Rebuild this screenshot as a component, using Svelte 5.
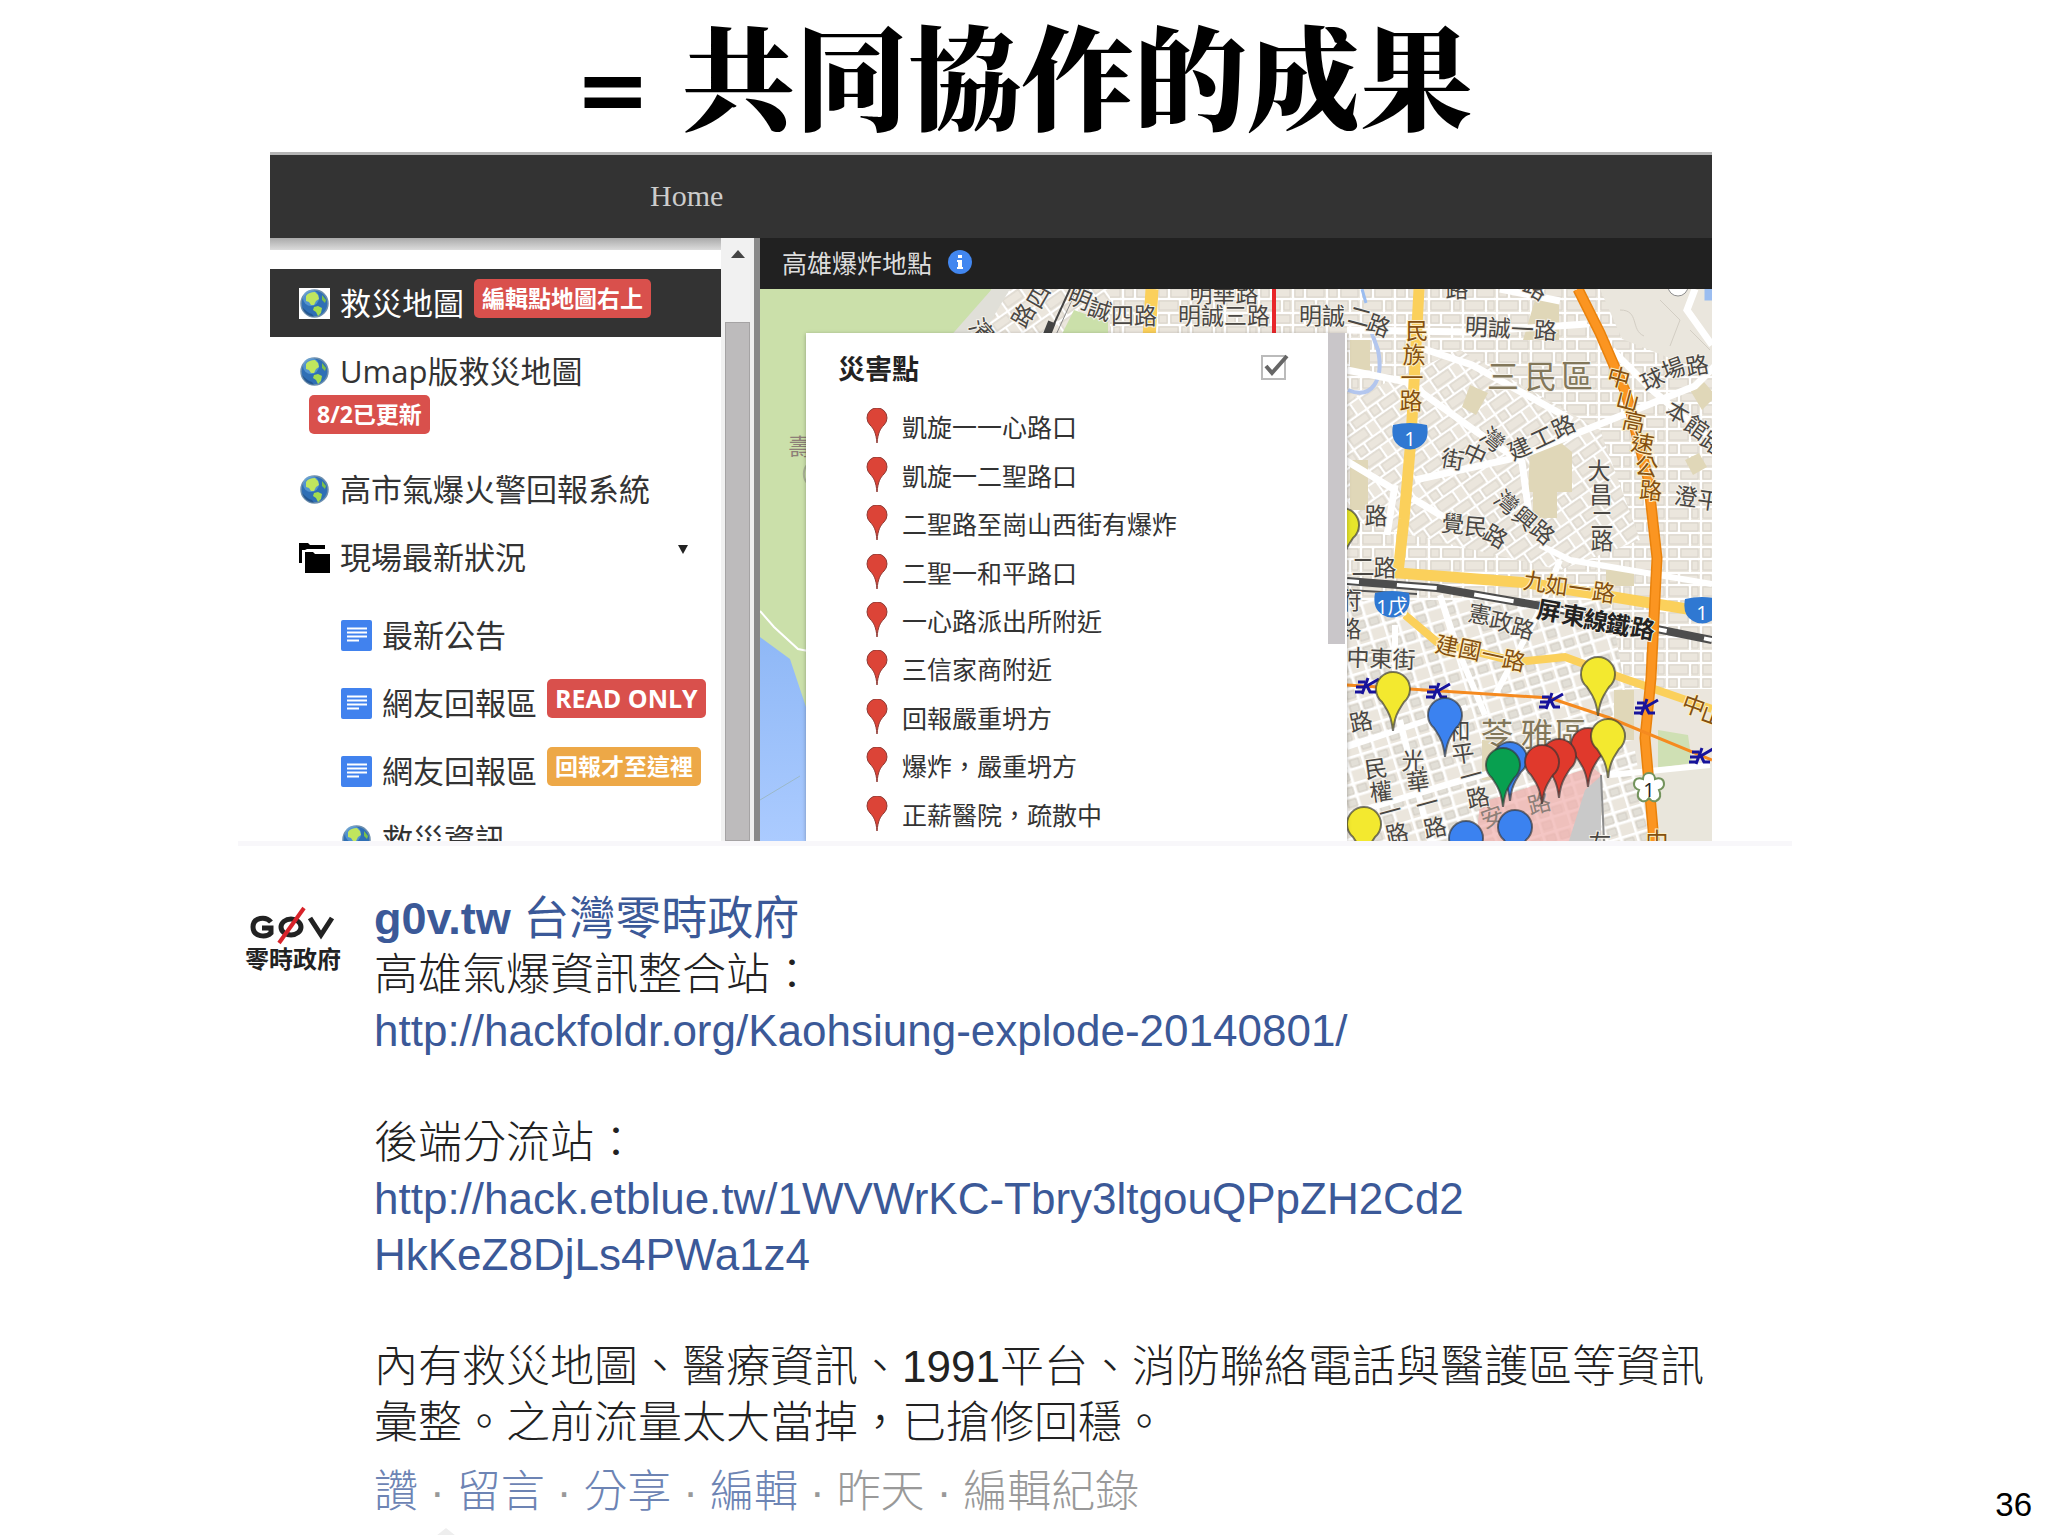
<script lang="ts">
	type Item = { icon: string; text: string; badge?: string; tone?: string; active?: boolean; wrap?: boolean };
	type Label = [string, number, number, number?, string?];

	const items: Item[] = [
		{ icon: 'globe', text: '救災地圖', badge: '編輯點地圖右上', tone: 'red', active: true },
		{ icon: 'globe', text: 'Umap版救災地圖', badge: '8/2已更新', tone: 'red', wrap: true },
		{ icon: 'globe', text: '高市氣爆火警回報系統' },
		{ icon: 'folder', text: '現場最新狀況' }
	];

	const subItems: Item[] = [
		{ icon: 'doc', text: '最新公告' },
		{ icon: 'doc', text: '網友回報區', badge: 'READ ONLY', tone: 'red latin' },
		{ icon: 'doc', text: '網友回報區', badge: '回報才至這裡', tone: 'orange' },
		{ icon: 'globe', text: '救災資訊' }
	];

	const places = [
		'凱旋一一心路口',
		'凱旋一二聖路口',
		'二聖路至崗山西街有爆炸',
		'二聖一和平路口',
		'一心路派出所附近',
		'三信家商附近',
		'回報嚴重坍方',
		'爆炸，嚴重坍方',
		'正薪醫院，疏散中'
	];

	let showLayer = $state(true);

	// text, x, y, rotation, kind
	const labels: Label[] = [
		['四', 1038, 296, -60], ['路', 1023, 315, -60], ['濱', 982, 330, 50],
		['明', 1080, 298, 22], ['誠', 1100, 309, 18], ['四路', 1134, 315],
		['明華路', 1224, 293], ['明誠三路', 1224, 315],
		['明誠', 1322, 315], ['二', 1360, 316, 15], ['路', 1379, 325, 20],
		['路', 1457, 288], ['路', 1536, 288, 30],
		['明誠一路', 1511, 328, 3],
		['民', 1417, 330, 0, 'major'], ['族', 1414, 354, 0, 'major'], ['一', 1412, 377, 0, 'major'], ['路', 1411, 400, 0, 'major'],
		['三', 1503, 375, 0, 'area'], ['民', 1541, 375, 0, 'area'], ['區', 1577, 375, 0, 'area'],
		['中', 1619, 377, 15, 'major'], ['山', 1628, 400, 15, 'major'], ['高', 1634, 421, 12, 'major'],
		['速', 1643, 443, 10, 'major'], ['公', 1647, 466, 8, 'major'], ['路', 1651, 490, 5, 'major'],
		['球', 1652, 379, -25], ['場', 1673, 368, -20], ['路', 1697, 365, -10],
		['本', 1678, 412, 30], ['館', 1697, 427, 35], ['路', 1713, 443, 35],
		['建', 1519, 448, -25], ['工', 1542, 437, -25], ['路', 1563, 426, -25],
		['灣', 1493, 439, 40], ['中', 1475, 454, 25], ['街', 1453, 459, 10],
		['大', 1599, 470], ['昌', 1601, 494], ['二', 1602, 519], ['路', 1602, 540],
		['灣', 1507, 502, 40], ['興', 1525, 518, 40], ['路', 1543, 532, 40],
		['覺', 1453, 523, 5], ['民', 1476, 526, 5], ['路', 1496, 536, 30],
		['澄', 1686, 496, 8], ['平', 1709, 500, 8],
		['路', 1376, 515], ['二', 1363, 566], ['路', 1385, 567],
		['九', 1535, 581, 8, 'major'], ['如', 1557, 585, 8, 'major'], ['一', 1580, 588, 8, 'major'], ['路', 1604, 592, 8, 'major'],
		['屏', 1549, 610, 10, 'rail'], ['東', 1574, 615, 10, 'rail'], ['線', 1596, 620, 10, 'rail'], ['鐵', 1618, 624, 10, 'rail'], ['路', 1643, 628, 10, 'rail'],
		['憲', 1480, 614, 10], ['政', 1501, 621, 12], ['路', 1523, 628, 15],
		['建', 1447, 645, 12, 'major'], ['國', 1470, 649, 12, 'major'], ['一', 1493, 655, 12, 'major'], ['路', 1514, 660, 12, 'major'],
		['中東街', 1381, 658, 2], ['路', 1361, 721, -12],
		['和', 1459, 730], ['平', 1463, 753, -8],
		['光', 1413, 760], ['華', 1418, 781, -8], ['民', 1376, 768, -8], ['權', 1381, 791, -8],
		['路', 1478, 797, -12], ['路', 1397, 833, -12], ['路', 1435, 827, -12],
		['一', 1471, 775, -15], ['一', 1427, 803, -15], ['一', 1390, 811, -15],
		['苓', 1497, 733, 0, 'area'], ['雅', 1537, 733, 0, 'area'], ['區', 1571, 733, 0, 'area'],
		['中', 1694, 705, 20, 'major'], ['山', 1713, 715, 20, 'major'],
		['安', 1492, 816, -20, 'soft'], ['路', 1539, 803, -15, 'soft'],
		['左', 1600, 842], ['中', 1657, 840, 0, 'major'],
		['府', 1350, 600], ['路', 1350, 628], ['壽', 800, 446, 0, 'soft']
	];

	const stations = [[1368, 686], [1439, 691], [1552, 701], [1647, 707], [1702, 756]];

	const markers = [
		{ x: 1342, y: 524, fill: '#e6e52b' },
		{ x: 1393, y: 688, fill: '#f3e92f' },
		{ x: 1445, y: 714, fill: '#3b82f0' },
		{ x: 1598, y: 673, fill: '#f3e92f' },
		{ x: 1588, y: 744, fill: '#e0392c' },
		{ x: 1559, y: 755, fill: '#e0392c' },
		{ x: 1510, y: 758, fill: '#3b82f0' },
		{ x: 1542, y: 761, fill: '#e0392c' },
		{ x: 1503, y: 764, fill: '#08a050' },
		{ x: 1608, y: 735, fill: '#f3e92f' },
		{ x: 1515, y: 826, fill: '#3b82f0' },
		{ x: 1466, y: 837, fill: '#3b82f0' },
		{ x: 1364, y: 823, fill: '#f3e92f' }
	];
</script>

{#snippet icon(name: string)}
	{#if name === 'globe'}
		<svg class="icon" viewBox="0 0 31 31" aria-hidden="true">
			<rect width="31" height="31" fill="#fff" />
			<circle cx="15.5" cy="15.5" r="13.5" fill="#2f6fb5" stroke="#6d8fae" stroke-width="1.5" />
			<circle cx="12" cy="10" r="8" fill="#6fb1e6" opacity=".55" />
			<path d="M7 8c2-3 5-4 9-4l3 3 1 4-3 2-2 4-3 0-2-3-3-1z" fill="#c0e65e" />
			<path d="M15 19l4-1 4 2-1 5-3 3-2-4-3-2z" fill="#a4dc4e" />
			<path d="M23 7l4 5-1 3-3-3z" fill="#7cc04a" />
			<path d="M3 19c2 6 6 9 12 10l-2-3c-4-1-7-4-10-7z" fill="#17406f" opacity=".5" />
		</svg>
	{:else if name === 'folder'}
		<svg class="icon" viewBox="0 0 31 31" aria-hidden="true">
			<path d="M0 1h9l2 2h15v4H8l-2 1H3v13H0z" fill="#000" />
			<path d="M6 10h8l2 2h15v19H6z" fill="#000" />
		</svg>
	{:else}
		<svg class="icon" viewBox="0 0 31 31" aria-hidden="true">
			<rect width="31" height="31" rx="2" fill="#4182ee" />
			<path d="M6 8.500h20M6 12.500h20M6 16.500h20M6 20.500h12" stroke="#fff" stroke-width="1.800" />
		</svg>
	{/if}
{/snippet}

{#snippet row(item: Item)}
	<a class="row" class:active={item.active} class:wrap={item.wrap} href="#{item.icon}">
		{@render icon(item.icon)}
		<span class="row-text">{item.text}</span>
		{#if item.badge}
			<span class="badge {item.tone}">{item.badge}</span>
		{/if}
		{#if item.icon === 'folder'}
			<span class="caret"></span>
		{/if}
	</a>
{/snippet}

<div class="slide">
	<h1><span class="equals">=</span> 共同協作的成果</h1>

	<section class="shot">
		<header class="topbar"><a href="#home">Home</a></header>

		<div class="body">
			<nav class="sidebar">
				<div class="list">
					{#each items as item}
						{@render row(item)}
					{/each}
					<div class="sub">
						{#each subItems as item}
							{@render row(item)}
						{/each}
					</div>
				</div>
				<div class="scrollbar">
					<span class="arrow"></span>
					<span class="thumb"></span>
				</div>
			</nav>

			<div class="map">
				<div class="map-title">
					<span>高雄爆炸地點</span>
					<svg width="24" height="24" viewBox="0 0 24 24" aria-hidden="true">
						<circle cx="12" cy="12" r="12" fill="#4287f0" />
						<path d="M10 5h4v3h-4zM9 10h5v7h1v2H9v-2h1v-5H9z" fill="#fff" />
					</svg>
				</div>

				<div class="canvas">
					<svg class="tiles" viewBox="760 289 952 552" preserveAspectRatio="xMinYMin slice" role="img" aria-label="高雄市地圖">
						<defs>
							<pattern id="gridA" width="34" height="26" patternUnits="userSpaceOnUse">
								<path d="M0 1h34M1 0v26M13 1v12M24 13v13M1 13h33" fill="none" stroke="#fff" stroke-width="2" />
								<path d="M3 3h8v8H3zM15 3h17v8H15zM3 15h19v9H3zM26 15h6v9h-6z" fill="none" stroke="#d8d3ca" stroke-width="1" />
							</pattern>
							<pattern id="gridB" width="34" height="26" patternUnits="userSpaceOnUse" patternTransform="rotate(-35)">
								<path d="M0 1h34M1 0v26M13 1v12M24 13v13M1 13h33" fill="none" stroke="#fff" stroke-width="2" />
								<path d="M3 3h8v8H3zM15 3h17v8H15zM3 15h19v9H3z" fill="none" stroke="#d8d3ca" stroke-width="1" />
							</pattern>
							<pattern id="gridC" width="30" height="26" patternUnits="userSpaceOnUse" patternTransform="rotate(-17)">
								<path d="M0 1h30M1 0v26M15 1v25M1 13h29" fill="none" stroke="#fff" stroke-width="3" />
								<path d="M4 4h9v7H4zM18 4h9v7h-9zM4 16h9v7H4z" fill="#e2dfd7" stroke="#d0ccc3" stroke-width="1" />
							</pattern>
							<linearGradient id="sea" x1="0" y1="0" x2="0" y2="1">
								<stop offset="0" stop-color="#8fb8f6" />
								<stop offset="1" stop-color="#abcbff" />
							</linearGradient>
						</defs>

						<rect x="760" y="289" width="952" height="552" fill="#ebe6dd" />
						<rect x="1110" y="289" width="602" height="400" fill="url(#gridA)" />
						<path d="M1347 400L1460 350 1600 430 1640 540 1560 570 1347 520z" fill="#ebe6dd" />
						<path d="M1347 400L1460 350 1600 430 1640 540 1560 570 1347 520zM960 289h150v60H940z" fill="url(#gridB)" />
						<path d="M1340 600h270l40 241h-310z" fill="#ebe6dd" />
						<path d="M1340 600h270l40 241h-310z" fill="url(#gridC)" />
						<path d="M1600 289h112v80l-40-10-50-20z" fill="#eae6dd" />
						<path d="M1620 310c20 0 10 20 24 26M1660 300l20 20-10 26M1690 330l20 20" fill="none" stroke="#d3cec4" stroke-width="1" />
						<path d="M1652 775l60-12v78h-50z" fill="#e9e6dc" />

						<!-- blocks and parks -->
						<path d="M1535 300h24v40h-36zM1530 450l30-8 12 10v40h-44zM1533 492h24v26h-24zM1690 390l14-8 12 14-14 14zM1350 340h20v30h-20zM1685 460l14-7 8 14-14 8zM1470 385l18 8-12 22-14-8zM1606 570h28v16h-28zM1350 460h18v50h-18zM1482 740h24v40h-24zM1614 690h20v50h-20z" fill="#e0d7b8" />
						<path d="M1658 730l30 5 4 28-34 5z" fill="#cfe0b4" />
						<path d="M1348 390c24 10 36-10 30-40l-8-22" fill="none" stroke="#b3c6ee" stroke-width="4" />
						<path d="M1362 289l4 14M1706 289v10h6v-10z" stroke="#9bbdf0" stroke-width="3" fill="#9bbdf0" />

						<!-- green belt and sea -->
						<path d="M760 289h232l-42 60H806v492h-46z" fill="#cbe0aa" />
						<path d="M992 289h18l-30 50h-32z" fill="#e0dfd8" />
						<path d="M1074 310l34 12v20h-50z" fill="#cbe0aa" />
						<path d="M760 637l30 22 10 30 8 24v128h-48z" fill="url(#sea)" />
						<path d="M760 611l14 16 24 22 10 2" fill="none" stroke="#fff" stroke-width="2" />
						<path d="M808 464a14 14 0 0 0 0 20" fill="none" stroke="#a9b396" stroke-width="2" />
						<path d="M760 800l40-24" stroke="#9bb8c8" stroke-width="1" />

						<!-- minor roads -->
						<g fill="none" stroke="#fff" stroke-width="7">
							<path d="M1347 370l60 12 70 50 45 30 8 60M1412 345l60 20 100 55M1415 480l100-22 180-72 20-20M1345 460l50 30M1412 498l50 30M1395 485l-8 50" />
							<path d="M1347 330l120 2 120-8M1500 289l60 12M1612 350l40 40 60 50M1712 345l-25-35 8-21" />
							<path d="M1560 560l-20 50-45 85M1440 595l20 60 25 60M1347 815l100-30 160-45M1347 747l120-40M1400 720l30 121M1610 775l100-10M1395 625v60M1540 545l30 15 142 24" stroke-width="6" />
						</g>

						<path d="M1480 803l112-36 10 8-26 66h-100z" fill="#f0b3b0" opacity=".75" />
						<path d="M1585 790l16-14v65h-32z" fill="#c9c9c9" />
						<path d="M1601 775l3 66" stroke="#8d8d8d" stroke-width="2" />

						<!-- rail -->
						<path d="M1347 581l90 7 110 19 165 33" fill="none" stroke="#4d4d4d" stroke-width="8" />
						<path d="M1347 581l90 7 110 19 165 33" fill="none" stroke="#fff" stroke-width="4" stroke-dasharray="40 38" stroke-dashoffset="28" />
						<path d="M1347 590l70 4" stroke="#555" stroke-width="2" />
						<path d="M1070 289l-22 48" stroke="#444" stroke-width="2" />
						<path d="M1077 289l-22 48" stroke="#888" stroke-width="1" />
						<path d="M1052 322l-6 15" stroke="#444" stroke-width="8" />

						<!-- main roads -->
						<g fill="none" stroke="#fbd05b" stroke-width="11">
							<path d="M1419 289l-8 150-7 80-6 54 130 10 184 30" />
							<path d="M1405 615l32 27 80 20 48-5 60 22 87 30" stroke-width="8" />
							<path d="M1152 289l-3 50" stroke-width="13" />
						</g>
						<path d="M1578 289l22 44 26 60 22 85 9 80-6 120-6 60 9 103" fill="none" stroke="#e9820c" stroke-width="11" />
						<path d="M1578 289l22 44 26 60 22 85 9 80-6 120-6 60 9 103" fill="none" stroke="#fb9521" stroke-width="8" />
						<path d="M1347 685l203 13 60 20 102 42" fill="none" stroke="#f58a1f" stroke-width="3" />
						<path d="M1274 289v50" stroke="#e8262a" stroke-width="4" />

						{#each labels as [text, x, y, turn = 0, kind = 'minor']}
							<text class="label {kind}" {x} {y} transform="rotate({turn} {x} {y})">{text}</text>
						{/each}

						<!-- road shields -->
						{#each [[1410, 437], [1392, 605], [1702, 611]] as [x, y]}
							<g transform="translate({x} {y})">
								<path d="M-17-12q17-4 34 0q3 16-8 22q-9 5-18 0q-11-6-8-22z" fill="#2f78d2" />
								<text class="shield" y="1">{x === 1392 ? '1戊' : '1'}</text>
							</g>
						{/each}
						<path
							transform="translate(1649 788)"
							d="M0-15c4 0 6 3 6 6 5-2 9 0 9 5 0 3-2 5-5 6 2 4 2 9-3 11-3 1-5 0-7-3-2 3-4 4-7 3-5-2-5-7-3-11-3-1-5-3-5-6 0-5 4-7 9-5 0-3 2-6 6-6z"
							fill="#fff"
							stroke="#73935c"
							stroke-width="2"
						/>
						<text class="shield dark" x="1649" y="789">1</text>
						<circle cx="1678" cy="286" r="10" fill="#fff" stroke="#8d8d8d" />

						{#each stations as [x, y]}
							<g transform="translate({x} {y})" stroke="#17139b" stroke-width="3" fill="none">
								<path d="M0-8l-6 16M11-7L-3 1M-1 0l3 6h6M-10-4h7M-12 1h8M-13 6h8" />
							</g>
						{/each}

						{#each markers as { x, y, fill }}
							<path
								transform="translate({x} {y})"
								d="M0 43C-2 26-6 22-11 14A17 17 0 1 1 11 14C6 22 2 26 0 43z"
								{fill}
								stroke="#333"
								stroke-opacity=".65"
								stroke-width="2"
							/>
						{/each}
					</svg>

					<div class="panel">
						<div class="panel-main">
							<div class="panel-head">
								<label for="layer">災害點</label>
								<span class="tick">
									<input id="layer" type="checkbox" bind:checked={showLayer} />
									{#if showLayer}
										<svg viewBox="0 0 28 26" aria-hidden="true">
											<path d="M5 12l6 7L26 2" fill="none" stroke="#666" stroke-width="4" />
										</svg>
									{/if}
								</span>
							</div>
							<ul>
								{#each places as place}
									<li>
										<svg width="22" height="36" viewBox="0 0 22 36" aria-hidden="true">
											<path d="M11 35C10 25 8 21 4 17A10 10 0 1 1 18 17C14 21 12 25 11 35z" fill="#dc4437" stroke="#8e3a34" stroke-width="1" />
										</svg>
										{place}
									</li>
								{/each}
							</ul>
						</div>
						<div class="panel-scroll"></div>
					</div>
				</div>
			</div>
		</div>
	</section>

	<hr />

	<article class="post">
		<svg class="logo" viewBox="0 0 96 72" role="img" aria-label="g0v 零時政府">
			<g fill="none" stroke="#222" stroke-width="5">
				<path d="M26 16C21 10 8 11 8 21S21 32 26 27V22H17" />
				<ellipse cx="46" cy="21" rx="10" ry="8" />
				<path d="M65 12l11 17 11-17" />
			</g>
			<path d="M59 2L34 37" stroke="#d8232a" stroke-width="4" />
			<text class="logo-text" x="48" y="62">零時政府</text>
		</svg>

		<div class="content">
			<h2><a href="#g0v">g0v.tw <span>台灣零時政府</span></a></h2>
			<p>高雄氣爆資訊整合站：<br /><a href="http://hackfoldr.org/Kaohsiung-explode-20140801/">http://hackfoldr.org/Kaohsiung-explode-20140801/</a></p>
			<p>後端分流站：<br /><a href="http://hack.etblue.tw/1WVWrKC-Tbry3ltgouQPpZH2Cd2HkKeZ8DjLs4PWa1z4">http://hack.etblue.tw/1WVWrKC-Tbry3ltgouQPpZH2Cd2<br />HkKeZ8DjLs4PWa1z4</a></p>
			<p>內有救災地圖、醫療資訊、1991平台、消防聯絡電話與醫護區等資訊<br />彙整。之前流量太大當掉，已搶修回穩。</p>
			<div class="actions">
				<button type="button">讚</button><span>·</span>
				<button type="button">留言</button><span>·</span>
				<button type="button">分享</button><span>·</span>
				<button type="button">編輯</button><span>·</span>
				<span class="when">昨天</span><span>·</span>
				<a href="#history">編輯紀錄</a>
			</div>
			<span class="notch"></span>
		</div>

		<span class="page-no">36</span>
	</article>
</div>

<style>
	:global(body) {
		margin: 0;
		background: #fff;
	}

	.slide {
		overflow: hidden;
		font-family: 'Open Sans', 'Noto Sans CJK TC', sans-serif;
		color: #333;
	}

	a {
		color: inherit;
		text-decoration: none;
	}

	h1 {
		margin: 0;
		height: 152px;
		line-height: 164px;
		font-family: 'Liberation Sans', 'Noto Serif CJK TC', 'Noto Sans CJK TC', serif;
		font-size: 113px;
		font-weight: 900;
		color: #000;
		text-align: center;
		white-space: nowrap;
	}

	.equals {
		font-family: 'DejaVu Sans', sans-serif;
		font-size: 90px;
		line-height: 1;
	}

	.shot {
		margin: 0 336px 0 270px;
	}

	.topbar {
		box-sizing: border-box;
		height: 86px;
		padding-left: 380px;
		border-top: 3px solid #b5b5b5;
		background: #333;
		font-family: 'Liberation Serif', serif;
		font-size: 30px;
		line-height: 82px;
		color: #ccc;
	}

	.body {
		display: flex;
		height: 603px;
	}

	.sidebar {
		display: flex;
		flex: 0 0 484px;
		overflow: hidden;
		border-right: 6px solid #8a8a8a;
		background: #fff;
	}

	.list {
		flex: 1;
		padding-top: 31px;
		background: linear-gradient(#aaa, #dcdcdc) 0 0 / 100% 12px no-repeat;
	}

	.row {
		box-sizing: border-box;
		display: flex;
		align-items: center;
		height: 68px;
		padding: 0 29px;
		font-size: 31px;
		line-height: 40px;
		white-space: nowrap;
	}

	.row.active {
		background: #333;
		color: #fff;
	}

	.row.wrap {
		flex-wrap: wrap;
		align-content: flex-start;
		height: 118px;
		padding-top: 14px;
	}

	.row.wrap .badge {
		margin: 4px 120px 0 10px;
	}

	.icon {
		flex: none;
		width: 31px;
		height: 31px;
		margin-right: 10px;
	}

	.badge {
		margin: 0 0 10px 10px;
		padding: 0 8px;
		border-radius: 5px;
		font-size: 23px;
		font-weight: 700;
		line-height: 39px;
		color: #fff;
	}

	.badge.red {
		background: #d9504c;
	}

	.badge.orange {
		background: #eda847;
	}

	.badge.latin {
		font-size: 25px;
	}

	.caret {
		margin: 0 4px 16px auto;
		border: 5px solid transparent;
		border-top: 9px solid #222;
		border-bottom: 0;
	}

	.sub {
		padding: 10px 0 0 42px;
	}

	.sub .row {
		padding-right: 0;
	}

	.scrollbar {
		display: flex;
		flex: 0 0 33px;
		flex-direction: column;
		align-items: center;
		background: #f1f1f1;
	}

	.arrow {
		margin: 12px 0 64px;
		border: 7px solid transparent;
		border-top: 0;
		border-bottom: 8px solid #444;
	}

	.thumb {
		flex: 1;
		width: 23px;
		border: 1px solid #a5a3a4;
		background: #bdbbbc;
	}

	.map {
		display: flex;
		flex: 1;
		flex-direction: column;
		min-width: 0;
	}

	.map-title {
		box-sizing: border-box;
		display: flex;
		gap: 16px;
		align-items: center;
		height: 51px;
		padding: 0 22px 4px;
		background: #212121;
		font-size: 25px;
		color: #ddd;
	}

	.canvas {
		position: relative;
		flex: 1;
		overflow: hidden;
	}

	.tiles {
		display: block;
		width: 100%;
		height: 100%;
	}

	.label {
		font-size: 23px;
		text-anchor: middle;
		dominant-baseline: central;
		fill: #4a4743;
		stroke: #f4f1ea;
		stroke-width: 2px;
		paint-order: stroke;
	}

	.label.major {
		fill: #84500f;
		stroke: #fdeec4;
	}

	.label.area {
		font-size: 32px;
		fill: #82775a;
	}

	.label.rail {
		font-size: 24px;
		font-weight: 700;
		fill: #222;
	}

	.label.soft {
		fill: #8d7f78;
		stroke: none;
	}

	.shield {
		font-size: 20px;
		text-anchor: middle;
		dominant-baseline: central;
		fill: #fff;
	}

	.shield.dark {
		fill: #222;
	}

	.panel {
		position: absolute;
		top: 44px;
		bottom: 0;
		left: 46px;
		display: flex;
		width: 541px;
		background: #fff;
		box-shadow: 0 1px 4px rgba(0, 0, 0, 0.3);
	}

	.panel-main {
		flex: 1;
	}

	.panel-head {
		display: flex;
		align-items: center;
		justify-content: space-between;
		height: 69px;
		padding: 0 40px 0 32px;
		font-size: 27px;
		font-weight: 700;
		color: #222;
	}

	.tick {
		position: relative;
		display: flex;
	}

	.tick input {
		width: 25px;
		height: 25px;
		margin: 0 2px 0 0;
		border: 2px solid #bbb;
		background: #fff;
		appearance: none;
	}

	.tick svg {
		position: absolute;
		top: -1px;
		left: 0;
		width: 28px;
		height: 26px;
		pointer-events: none;
	}

	ul {
		display: grid;
		height: 436px;
		margin: 0;
		padding: 0 0 0 60px;
		list-style: none;
		font-size: 25px;
		color: #333;
	}

	li {
		display: flex;
		gap: 14px;
		align-items: center;
	}

	.panel-scroll {
		width: 17px;
		height: 311px;
		border-right: 2px solid #fff;
		background: #c9c6c9;
	}

	hr {
		height: 5px;
		margin: 0 256px 0 238px;
		border: 0;
		background: #f8f7fa;
	}

	.post {
		display: grid;
		grid-template-columns: 96px 1fr auto;
		column-gap: 33px;
		padding: 44px 16px 0 245px;
		font-family: 'Liberation Sans', 'Noto Sans CJK TC', sans-serif;
		font-size: 44px;
		font-weight: 300;
		line-height: 56px;
		color: #222;
		white-space: nowrap;
	}

	.logo {
		width: 96px;
		height: 72px;
		margin-top: 16px;
	}

	.logo-text {
		font-size: 24px;
		font-weight: 700;
		text-anchor: middle;
		fill: #222;
	}

	.content {
		min-width: 0;
	}

	h2 {
		margin: 0;
		font-size: 45px;
		line-height: 56px;
		color: #3b5998;
	}

	h2 span {
		font-size: 46px;
		font-weight: 400;
	}

	p {
		margin: 0 0 56px;
	}

	p:last-of-type {
		margin-bottom: 8px;
	}

	p a {
		color: #3b5998;
	}

	.actions {
		display: flex;
		gap: 12px;
		height: 64px;
		line-height: 66px;
		color: #999;
	}

	.actions button {
		padding: 0;
		border: 0;
		background: none;
		font: inherit;
		color: #6d84b4;
		cursor: pointer;
	}

	.notch {
		display: block;
		width: 0;
		margin: 5px 0 0 62px;
		border: 10px solid transparent;
		border-top: 0;
		border-bottom: 8px solid #eee;
	}

	.page-no {
		align-self: end;
		padding-bottom: 3px;
		font-size: 33px;
		font-weight: 400;
		color: #000;
	}
</style>
